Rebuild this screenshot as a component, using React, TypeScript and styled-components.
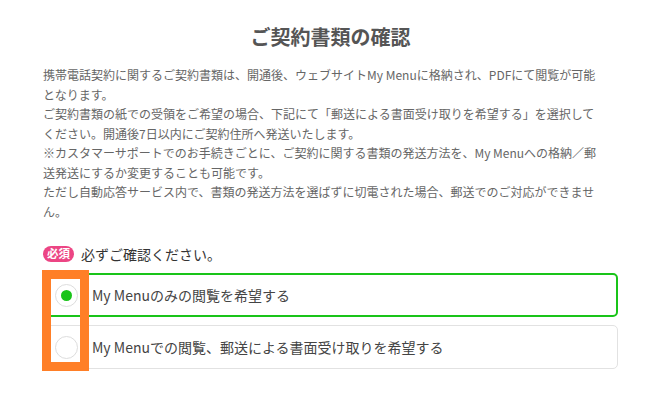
import React, { useState } from 'react';
import styled, { createGlobalStyle } from 'styled-components';

const GlobalStyle = createGlobalStyle`
  body {
    margin: 0;
    background: #ffffff;
    font-family: "Noto Sans CJK JP", "Noto Sans", sans-serif;
  }
`;

const Page = styled.div`
  position: relative;
  width: 664px;
  height: 400px;
  box-sizing: border-box;
  padding: 22px 46px 0 43px;
  overflow: hidden;
`;

const Title = styled.h2`
  margin: 0;
  text-align: center;
  font-size: 20px;
  line-height: 30px;
  font-weight: 700;
  color: #555555;
`;

const Notice = styled.p`
  margin: 13px 0 0;
  width: 558px;
  font-size: 12px;
  line-height: 19.5px;
  color: #666666;
  line-break: strict;
`;

const RequiredRow = styled.div`
  display: flex;
  align-items: center;
  gap: 7px;
  margin-top: 23px;
  height: 20px;
`;

const Badge = styled.span`
  display: inline-flex;
  align-items: center;
  justify-content: center;
  height: 16px;
  padding: 0 4px;
  border-radius: 8px;
  background: #ec4584;
  color: #ffffff;
  font-size: 11.5px;
  font-weight: 700;
  line-height: 1;
`;

const RequiredText = styled.span`
  font-size: 14px;
  color: #333333;
`;

const OptionList = styled.div`
  display: flex;
  flex-direction: column;
  gap: 8px;
  margin-top: 9px;
`;

const Option = styled.label<{ $selected: boolean }>`
  display: flex;
  align-items: center;
  gap: 14px;
  height: 44px;
  box-sizing: border-box;
  padding: 0 0 0 ${(p) => (p.$selected ? 10 : 11)}px;
  border: ${(p) => (p.$selected ? '2px solid #19c419' : '1px solid #e2e2e2')};
  border-radius: 5px;
  cursor: pointer;
`;

const Radio = styled.span<{ $checked: boolean }>`
  position: relative;
  flex: none;
  width: 23px;
  height: 23px;
  box-sizing: border-box;
  border: 1px solid #dddddd;
  border-radius: 50%;
  background: #ffffff;

  &::after {
    content: '';
    display: ${(p) => (p.$checked ? 'block' : 'none')};
    position: absolute;
    left: 50%;
    top: 50%;
    width: 11px;
    height: 11px;
    margin: -5.5px 0 0 -5.5px;
    border-radius: 50%;
    background: #19c419;
  }
`;

const OptionLabel = styled.span`
  font-size: 14px;
  color: #444444;
`;

const Highlight = styled.div`
  position: absolute;
  left: 42px;
  top: 270px;
  width: 47px;
  height: 101px;
  box-sizing: border-box;
  border: 9px solid #ff7f27;
  pointer-events: none;
`;

const options = [
  'My Menuのみの閲覧を希望する',
  'My Menuでの閲覧、郵送による書面受け取りを希望する',
];

export default function App() {
  const [selected, setSelected] = useState(0);
  return (
    <Page>
      <GlobalStyle />
      <Title>ご契約書類の確認</Title>
      <Notice>
        携帯電話契約に関するご契約書類は、開通後、ウェブサイトMy Menuに格納され、PDFにて閲覧が可能となります。
        <br />
        ご契約書類の紙での受領をご希望の場合、下記にて「郵送による書面受け取りを希望する」を選択してください。開通後7日以内にご契約住所へ発送いたします。
        <br />
        ※カスタマーサポートでのお手続きごとに、ご契約に関する書類の発送方法を、My Menuへの格納／郵送発送にするか変更することも可能です。
        <br />
        ただし自動応答サービス内で、書類の発送方法を選ばずに切電された場合、郵送でのご対応ができません。
      </Notice>
      <RequiredRow>
        <Badge>必須</Badge>
        <RequiredText>必ずご確認ください。</RequiredText>
      </RequiredRow>
      <OptionList>
        {options.map((label, i) => (
          <Option key={label} $selected={selected === i} onClick={() => setSelected(i)}>
            <Radio $checked={selected === i} />
            <OptionLabel>{label}</OptionLabel>
          </Option>
        ))}
      </OptionList>
      <Highlight />
    </Page>
  );
}
